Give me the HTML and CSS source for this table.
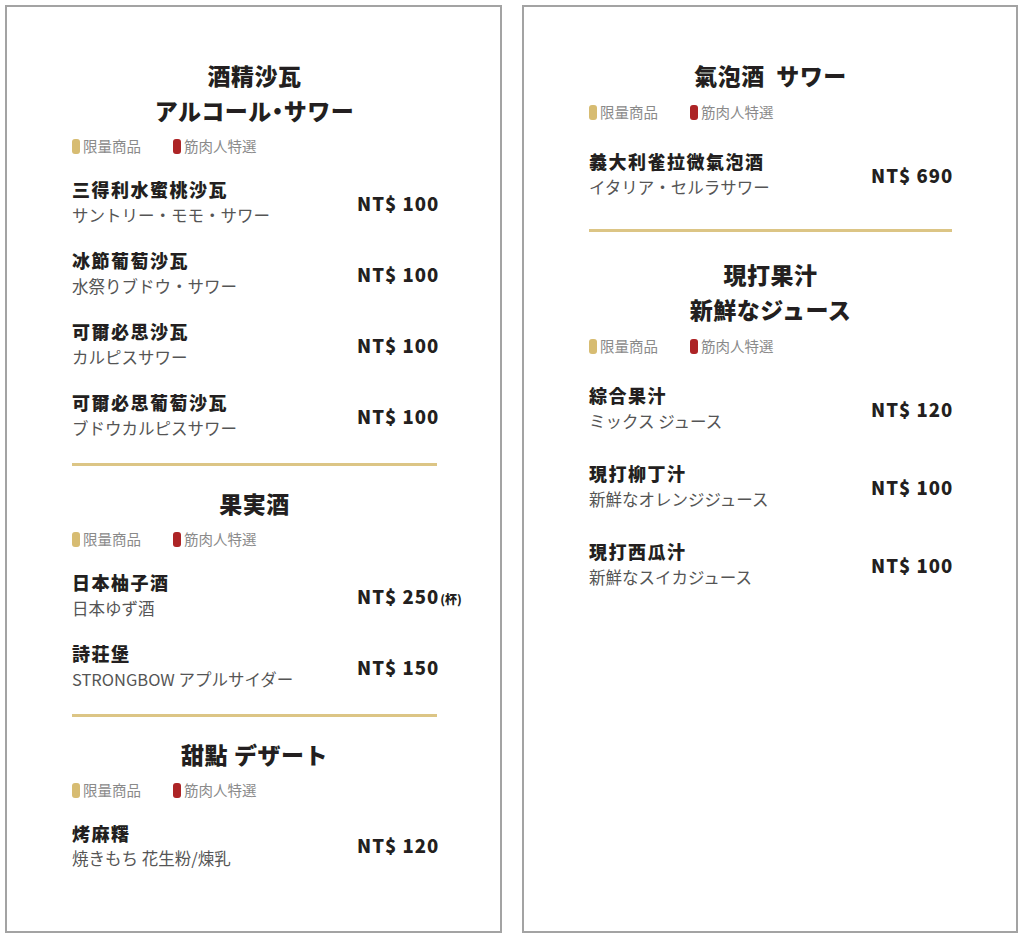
FILE: index.html
```html
<!DOCTYPE html>
<html lang="ja">
<head>
<meta charset="utf-8">
<link rel="stylesheet" href="styles.css">
</head>
<body>
<div class="page">
  <div class="panel">
    <section class="sec">
      <h2 class="title">酒精沙瓦<br>アルコール<span class="dot">・</span>サワー</h2>
      <div class="legend"><span class="tag"><i class="sw gold"></i>限量商品</span><span class="tag"><i class="sw red"></i>筋肉人特選</span></div>
      <div class="items">
        <div class="item"><div class="names"><div class="name">三得利水蜜桃沙瓦</div><div class="sub">サントリー・モモ・サワー</div></div><div class="price">NT$ 100</div></div>
        <div class="item"><div class="names"><div class="name">冰節葡萄沙瓦</div><div class="sub">水祭りブドウ・サワー</div></div><div class="price">NT$ 100</div></div>
        <div class="item"><div class="names"><div class="name">可爾必思沙瓦</div><div class="sub">カルピスサワー</div></div><div class="price">NT$ 100</div></div>
        <div class="item"><div class="names"><div class="name">可爾必思葡萄沙瓦</div><div class="sub">ブドウカルピスサワー</div></div><div class="price">NT$ 100</div></div>
      </div>
    </section>
    <hr class="divider">
    <section class="sec">
      <h2 class="title">果実酒</h2>
      <div class="legend"><span class="tag"><i class="sw gold"></i>限量商品</span><span class="tag"><i class="sw red"></i>筋肉人特選</span></div>
      <div class="items">
        <div class="item"><div class="names"><div class="name">日本柚子酒</div><div class="sub">日本ゆず酒</div></div><div class="price">NT$ 250<small>(杯)</small></div></div>
        <div class="item"><div class="names"><div class="name">詩荘堡</div><div class="sub">STRONGBOW アプルサイダー</div></div><div class="price">NT$ 150</div></div>
      </div>
    </section>
    <hr class="divider">
    <section class="sec">
      <h2 class="title">甜點 デザート</h2>
      <div class="legend"><span class="tag"><i class="sw gold"></i>限量商品</span><span class="tag"><i class="sw red"></i>筋肉人特選</span></div>
      <div class="items">
        <div class="item tight"><div class="names"><div class="name">烤麻糬</div><div class="sub">焼きもち 花生粉/煉乳</div></div><div class="price">NT$ 120</div></div>
      </div>
    </section>
  </div>
  <div class="panel wide">
    <section class="sec">
      <h2 class="title">氣泡酒&nbsp; サワー</h2>
      <div class="legend"><span class="tag"><i class="sw gold"></i>限量商品</span><span class="tag"><i class="sw red"></i>筋肉人特選</span></div>
      <div class="items">
        <div class="item"><div class="names"><div class="name">義大利雀拉微氣泡酒</div><div class="sub">イタリア・セルラサワー</div></div><div class="price">NT$ 690</div></div>
      </div>
    </section>
    <hr class="divider">
    <section class="sec">
      <h2 class="title">現打果汁<br>新鮮なジュース</h2>
      <div class="legend"><span class="tag"><i class="sw gold"></i>限量商品</span><span class="tag"><i class="sw red"></i>筋肉人特選</span></div>
      <div class="items">
        <div class="item"><div class="names"><div class="name">綜合果汁</div><div class="sub">ミックス ジュース</div></div><div class="price">NT$ 120</div></div>
        <div class="item"><div class="names"><div class="name">現打柳丁汁</div><div class="sub">新鮮なオレンジジュース</div></div><div class="price">NT$ 100</div></div>
        <div class="item"><div class="names"><div class="name">現打西瓜汁</div><div class="sub">新鮮なスイカジュース</div></div><div class="price">NT$ 100</div></div>
      </div>
    </section>
  </div>
</div>
</body>
</html>
```
FILE: styles.css
```css
* { box-sizing: border-box; }
html, body { margin: 0; padding: 0; background: #ffffff; }
body {
  font-family: "Noto Sans CJK JP", "Noto Sans", sans-serif;
  color: #231f20;
}
.page {
  display: flex;
  gap: 20px;
  padding: 5px 0 0 5px;
}
.panel {
  width: 497px;
  height: 928px;
  border: 2px solid #a3a3a3;
  padding: 51px 63px 0 65px;
}
.panel.wide { width: 496px; padding-right: 64px; }
.sec { display: flex; flex-direction: column; }
.title {
  margin: 0;
  text-align: center;
  font-size: 23px;
  font-weight: 900;
  line-height: 35px;
  letter-spacing: 0.5px;
}
.dot { font-feature-settings: "halt" 1; }
.legend {
  display: flex;
  gap: 32px;
  margin-top: 8px;
  font-size: 14.5px;
  line-height: 20px;
  color: #8a8a8a;
}
.tag { display: flex; align-items: center; gap: 3px; }
.sw {
  display: inline-block;
  width: 8px;
  height: 15px;
  border-radius: 3px;
}
.gold { background: #d7bc72; }
.red { background: #ad2426; }
.items {
  display: flex;
  flex-direction: column;
  gap: 18px;
  margin-top: 20px;
}
.item {
  display: grid;
  grid-template-columns: 285px auto;
  align-items: center;
}
.name {
  font-size: 18px;
  font-weight: 900;
  line-height: 26px;
  letter-spacing: 1.5px;
}
.sub {
  font-size: 16.5px;
  line-height: 27px;
  color: #555555;
}
.item.tight .sub { line-height: 24px; }
.price {
  font-size: 18.5px;
  font-weight: 900;
  letter-spacing: 1px;
  white-space: nowrap;
}
.price small { font-size: 12px; margin-left: 1px; letter-spacing: 0; }
.divider {
  border: 0;
  height: 3px;
  background: #dcc585;
  margin: 21px 0 20px;
}
.wide .legend { margin-top: 9px; }
.wide .items { margin-top: 26px; gap: 25px; }
.wide .divider { margin: 28px 0 25px; }
.wide .item { grid-template-columns: 282px auto; }
```
